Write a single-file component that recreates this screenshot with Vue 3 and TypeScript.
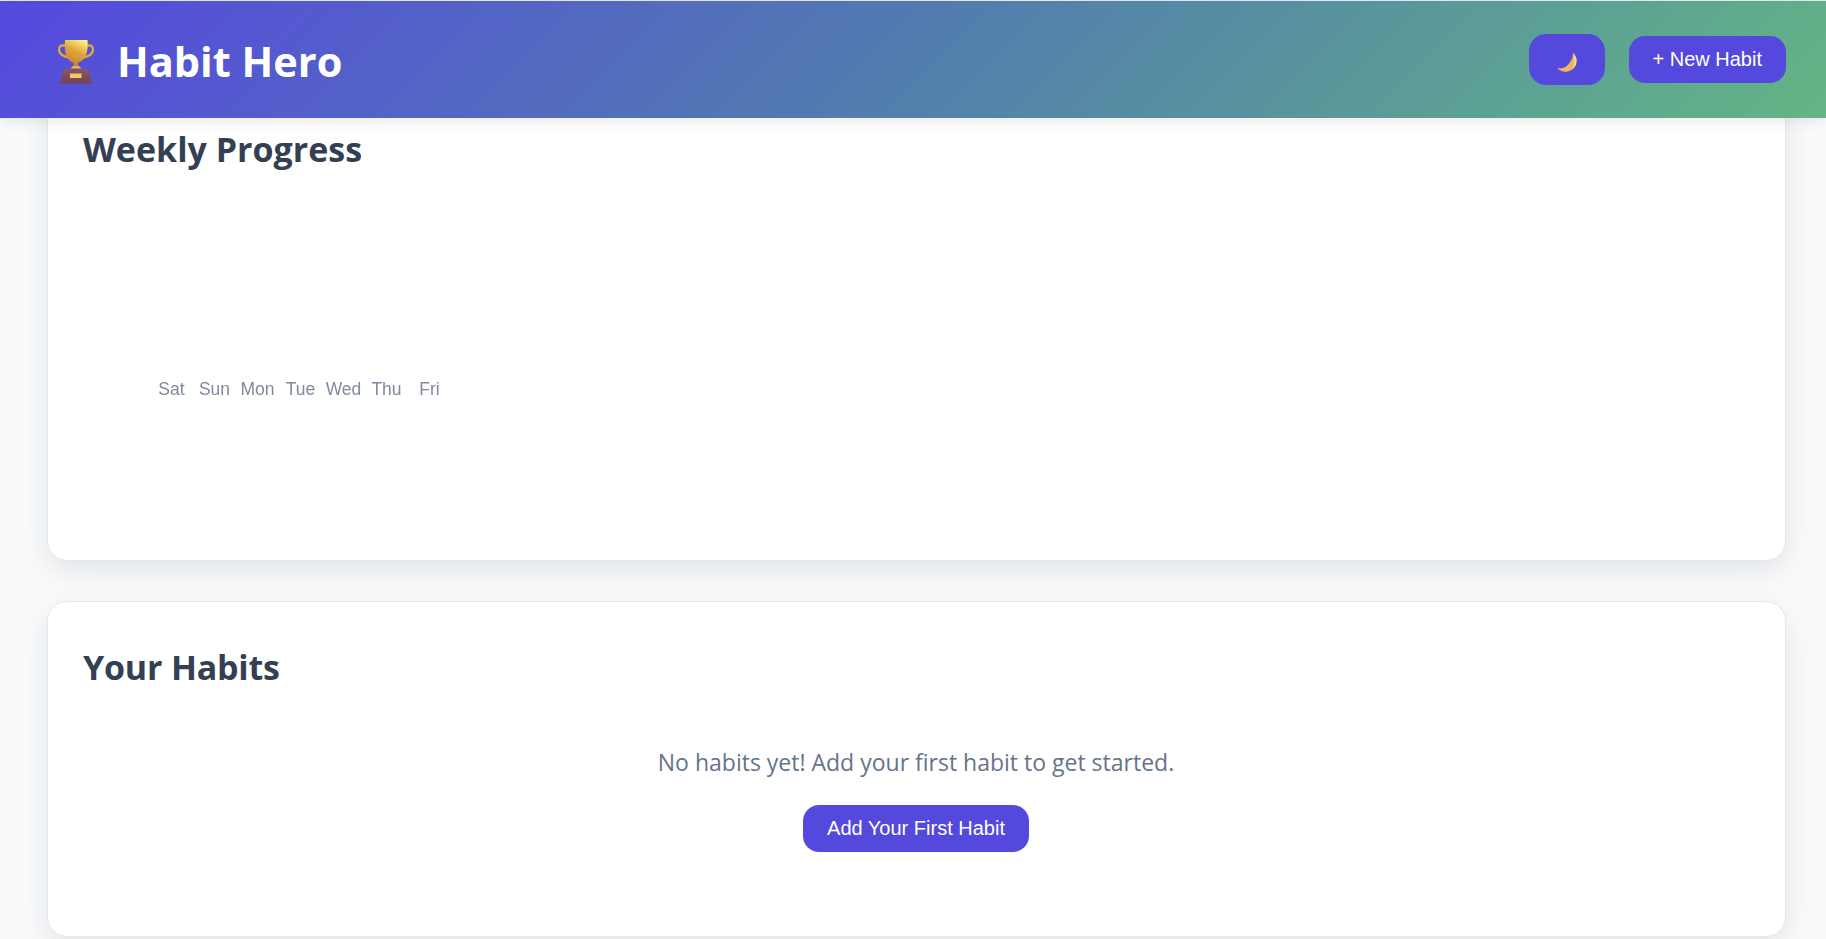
<script setup lang="ts">
const days: string[] = ['Sat', 'Sun', 'Mon', 'Tue', 'Wed', 'Thu', 'Fri']
</script>

<template>
  <div class="page">
    <header class="topbar">
      <div class="brand">
        <svg class="trophy" viewBox="0 0 36 44" aria-hidden="true">
          <defs>
            <linearGradient id="cup" x1="0.75" y1="0" x2="0.35" y2="1">
              <stop offset="0" stop-color="#fdf27e" />
              <stop offset="0.45" stop-color="#e0a63c" />
              <stop offset="1" stop-color="#c27d2e" />
            </linearGradient>
            <linearGradient id="base" x1="0" y1="0" x2="0" y2="1">
              <stop offset="0" stop-color="#8a5560" />
              <stop offset="1" stop-color="#70454f" />
            </linearGradient>
          </defs>
          <path d="M8 5.500H4.600C1.600 5.500.6 8.500 1.200 11c.8 3.200 4.300 5.300 8.800 6.500" fill="none" stroke="#e3a93c" stroke-width="2.300" />
          <path d="M28 5.500h3.400c3 0 4 3 3.400 5.500-.8 3.200-4.300 5.300-8.800 6.500" fill="none" stroke="#e3a93c" stroke-width="2.300" />
          <path d="M7 0h22.500c.6 9-.5 14.500-3 18-2 2.800-4.700 4-6.500 4.800V27h-4.500v-4.200c-2-.8-4.500-2-6.300-4.800C7.300 14.500 6.400 9 7 0Z" fill="url(#cup)" />
          <path d="M12.500 28.500 15 26h6l2.500 2.500Z" fill="#eeb643" />
          <path d="M5.500 29h25l3.500 14.500H2Z" fill="url(#base)" />
          <rect x="12" y="33.500" width="11.500" height="4.500" fill="#f2c861" />
        </svg>
        <h1>Habit Hero</h1>
      </div>
      <div class="actions">
        <button class="btn theme" type="button" aria-label="Toggle theme">
          <svg class="moon" viewBox="0 0 20 19" aria-hidden="true">
            <path d="M16 0c3.500 3 4.600 8 2.500 12.500C16 18 9 20.500 3.500 17.500 2 16.800.8 15.800 0 15c3.800 1 8-.2 10.800-3C14.300 8.500 16.300 4 16 0Z" fill="#edb462" />
            <path d="M16 0c3.500 3 4.600 8 2.500 12.500-.8 1.700-2 3.100-3.400 4.200 1.500-2.500 2.300-5.300 2-8.200C16.800 5.300 16.500 2.500 16 0Z" fill="#f7d98a" />
          </svg>
        </button>
        <button class="btn" type="button">+ New Habit</button>
      </div>
    </header>

    <main class="content">
      <section class="card weekly">
        <h2>Weekly Progress</h2>
        <div class="chart">
          <span v-for="day in days" :key="day" class="day">{{ day }}</span>
        </div>
      </section>

      <section class="card habits">
        <h2>Your Habits</h2>
        <div class="empty">
          <p>No habits yet! Add your first habit to get started.</p>
          <button class="btn" type="button">Add Your First Habit</button>
        </div>
      </section>
    </main>
  </div>
</template>

<style>
html, body {
  margin: 0;
  height: 100%;
  overflow: hidden;
  background: #f8fafc;
}
</style>

<style scoped>
.page {
  height: 939px;
  overflow: hidden;
  background: #f8fafc;
  font-family: "Open Sans", "Noto Sans", sans-serif;
}
.topbar {
  position: relative;
  z-index: 2;
  box-sizing: border-box;
  height: 118px;
  border-top: 1px solid #e4e4f2;
  padding: 0 40px 0 58px;
  display: flex;
  align-items: center;
  justify-content: space-between;
  background: linear-gradient(135deg, #5548df 0%, #527dae 50%, #63b585 100%);
  background-origin: border-box;
  box-shadow: 0 4px 12px rgba(0, 0, 0, 0.08);
}
.brand {
  display: flex;
  align-items: center;
  gap: 23px;
  margin-top: 5px;
}
.trophy {
  width: 36px;
  height: 44px;
  margin-top: 1px;
}
h1 {
  margin: 0;
  color: #fff;
  font-size: 41.5px;
  font-weight: 700;
  line-height: 1.2;
}
.actions {
  display: flex;
  align-items: center;
  gap: 24px;
}
.btn {
  box-sizing: border-box;
  height: 47px;
  padding: 0 24px;
  border: 0;
  border-radius: 16px;
  background: #5449dc;
  color: #fff;
  font-family: "Liberation Sans", Arial, sans-serif;
  font-size: 20px;
  display: inline-flex;
  align-items: center;
  justify-content: center;
}
.theme {
  width: 76px;
  height: 51px;
  border-radius: 17px;
}
.moon {
  width: 20px;
  height: 19px;
  margin-top: 6px;
}
.content {
  margin-top: -40px;
  padding: 0 40px 0 47px;
  display: flex;
  flex-direction: column;
  gap: 40px;
}
.card {
  box-sizing: border-box;
  background: #fff;
  border: 1px solid #e2e8f0;
  border-radius: 20px;
  padding: 0 36px 0 35px;
  box-shadow: 0 10px 30px rgba(0, 0, 0, 0.09);
}
.weekly {
  height: 483px;
}
.habits {
  height: 336px;
}
h2 {
  margin: 0;
  color: #343f54;
  font-size: 34px;
  font-weight: 700;
  line-height: 1.3;
}
.weekly h2 {
  padding-top: 48px;
}
.habits h2 {
  padding-top: 43px;
  letter-spacing: -0.2px;
}
.chart {
  display: flex;
  margin: 208px 0 0 67px;
  gap: 0;
}
.day {
  width: 43px;
  text-align: center;
  color: #7f8aa0;
  font-family: "Liberation Sans", Arial, sans-serif;
  font-size: 17.5px;
  filter: blur(0.6px);
}
.empty {
  margin-top: 56px;
  display: flex;
  flex-direction: column;
  align-items: center;
  gap: 26px;
}
.empty p {
  margin: 0;
  color: #64748b;
  font-size: 23px;
  line-height: 34px;
}
</style>
